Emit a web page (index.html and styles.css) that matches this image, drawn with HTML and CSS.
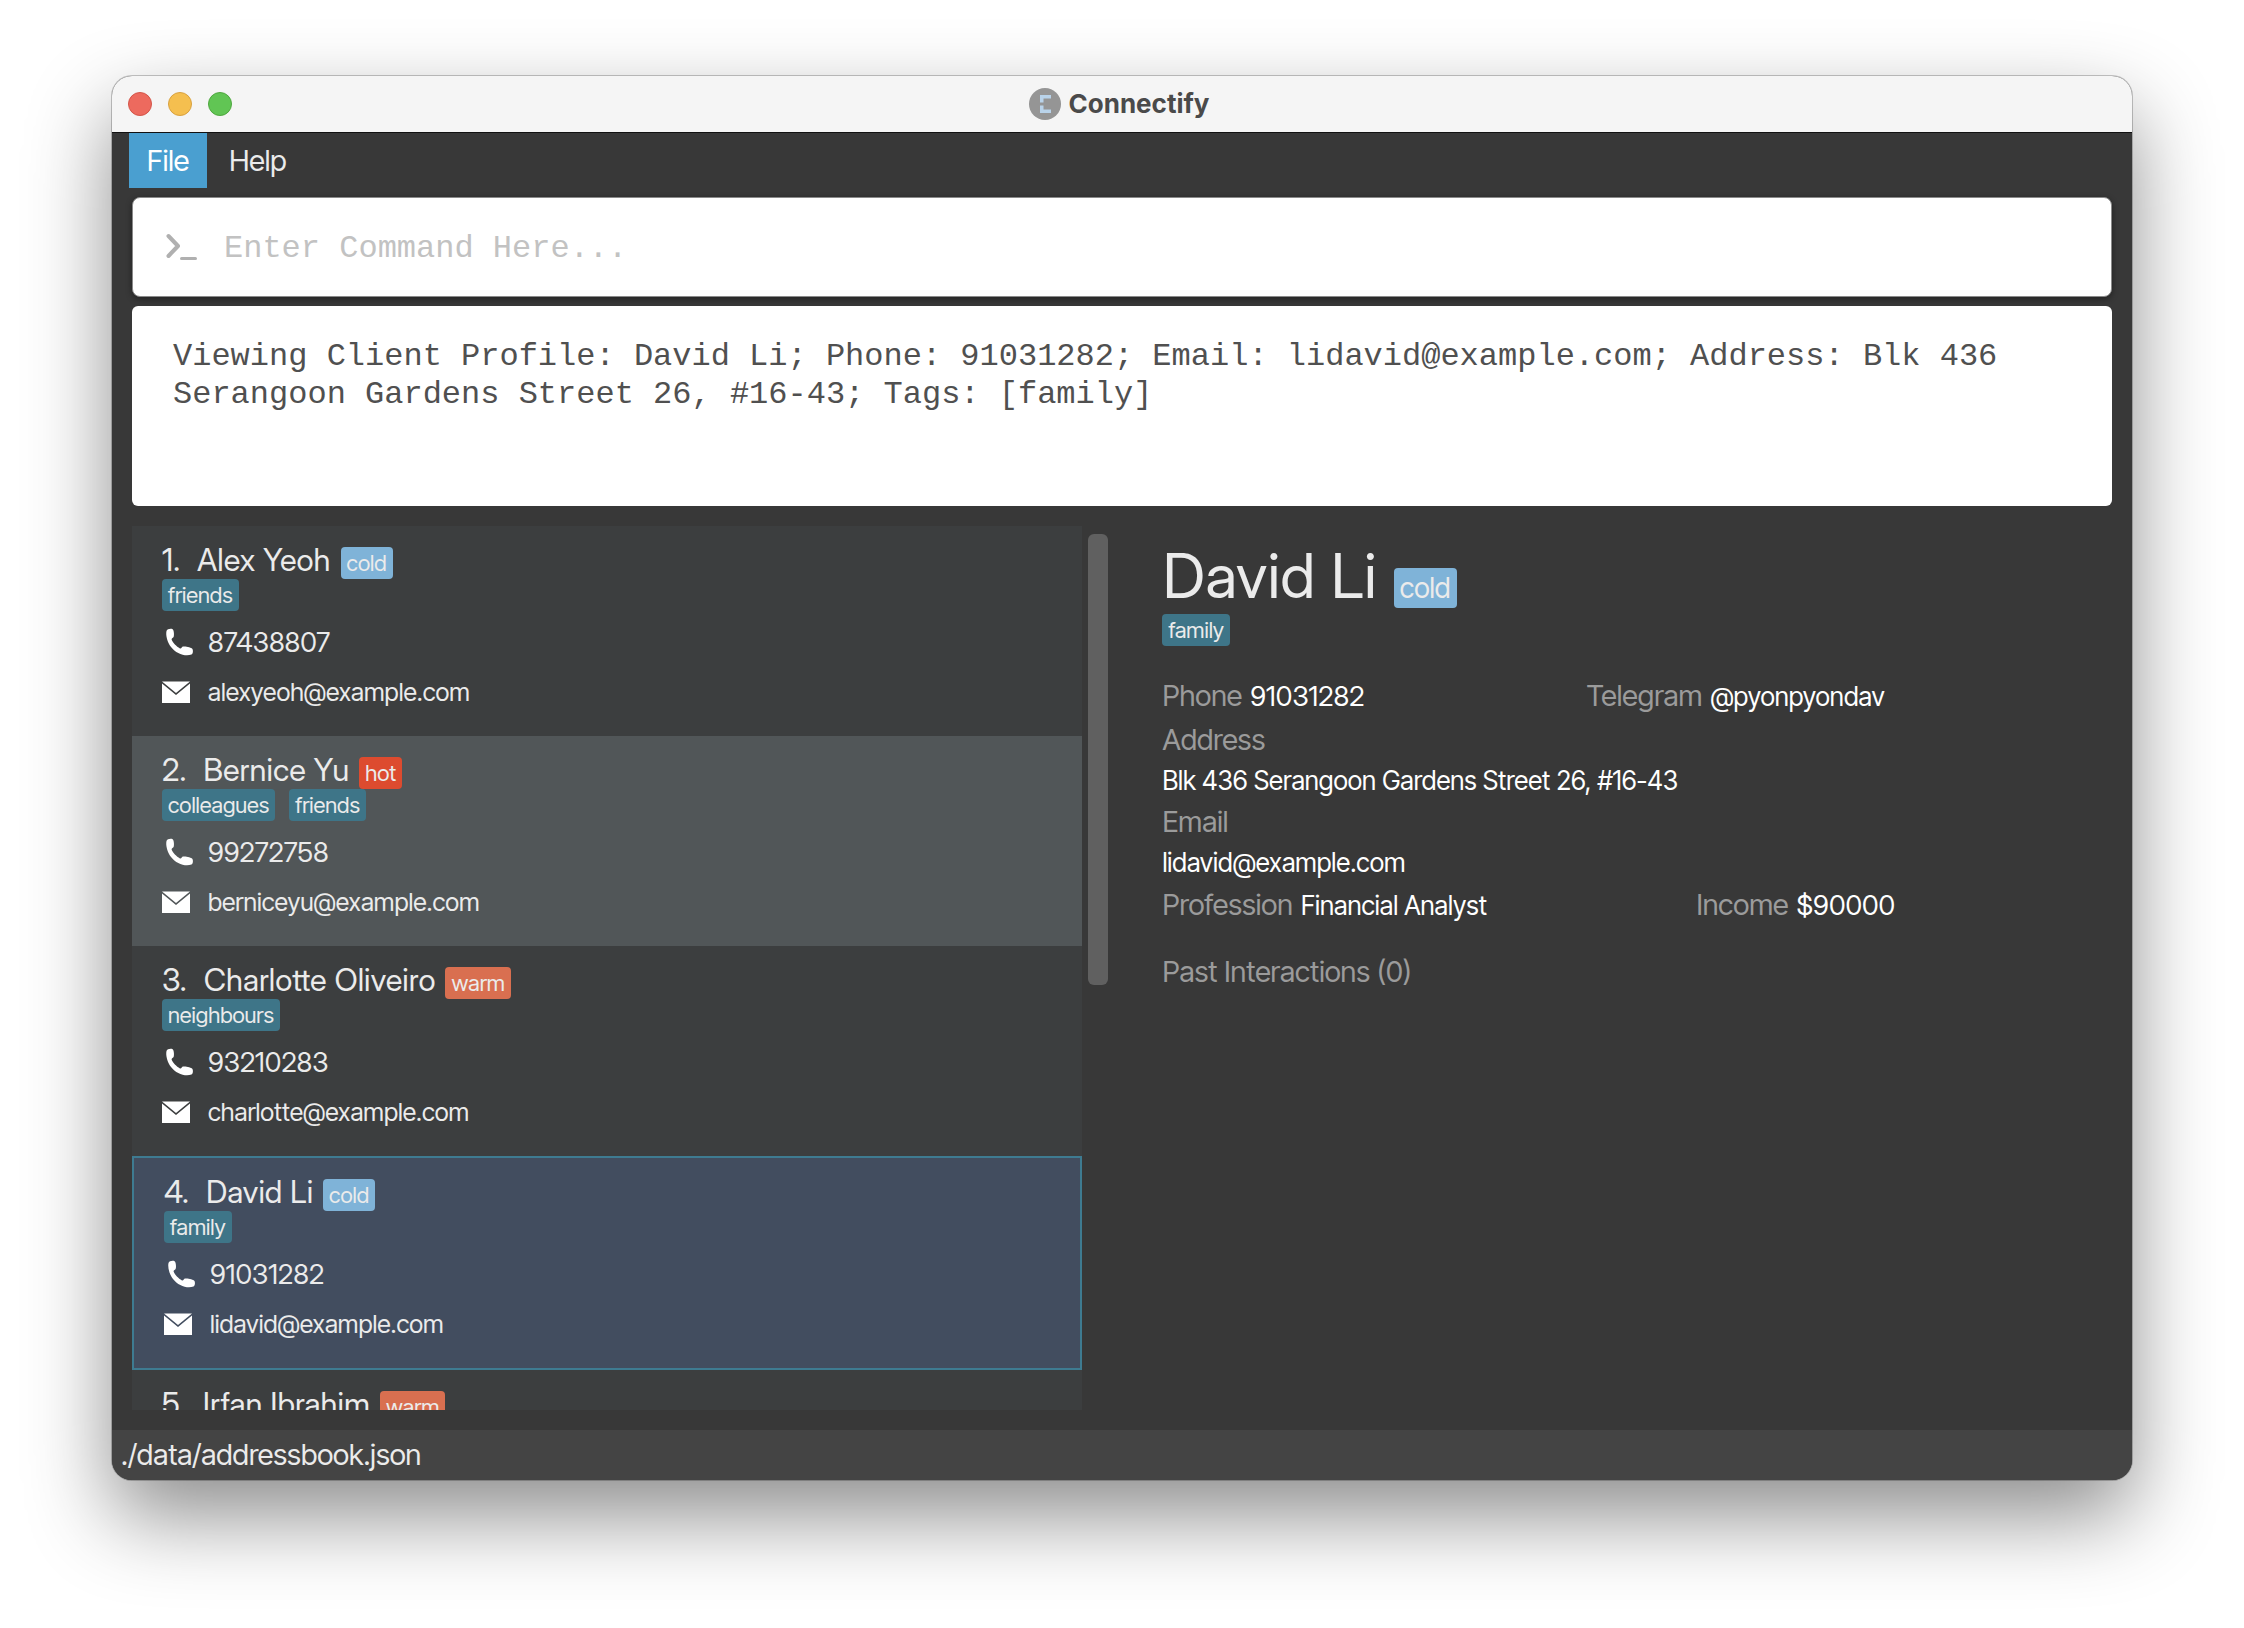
FILE: index.html
```html
<!DOCTYPE html>
<html lang="en">
<head>
  <meta charset="utf-8">
  <title>Connectify</title>
  <link rel="stylesheet" href="styles.css">
</head>
<body>
  <svg class="sprite" aria-hidden="true">
    <symbol id="icon-phone" viewBox="0 0 32 32">
      <path d="M4.500 5C5 3.200 8.500 2.200 10.600 3.200C12 4 12.300 9 11.700 10.800C11.400 11.800 9.300 12.400 9.600 13.600C10.800 17 14.500 20.600 18 22.400C19.200 23 20 20.800 21 20.600C23.500 20 29.500 21.500 30.500 23C31.400 25 30.900 28 29.500 28.600C23 31 14 27.500 9 21C5.500 16.500 3.500 9.500 4.500 5Z" fill="#fff"/>
    </symbol>
    <symbol id="icon-mail" viewBox="0 0 32 32">
      <path d="M0 5.500H28L14 17Z" fill="#fff"/>
      <path d="M0 7.500L14 19L28 7.500V27H0Z" fill="#fff"/>
    </symbol>
  </svg>

  <div class="window">
    <header class="titlebar">
      <div class="lights">
        <button class="light light-close" aria-label="Close"></button>
        <button class="light light-minimise" aria-label="Minimise"></button>
        <button class="light light-zoom" aria-label="Zoom"></button>
      </div>
      <h1 class="app-title">
        <svg class="logo" viewBox="0 0 32 32" aria-hidden="true">
          <circle cx="16" cy="16" r="16" fill="#959595"/>
          <path d="M22 7H11V14.500H14.500V10.500H22ZM11 17.500V25H22V21.500H14.500V17.500Z" fill="#b9d3ea"/>
        </svg>
        Connectify
      </h1>
    </header>

    <nav class="menubar">
      <button class="menu menu-open">File</button>
      <button class="menu">Help</button>
    </nav>

    <div class="content">
      <label class="command">
        <svg class="prompt" viewBox="0 0 32 32" role="img" aria-label="Command">
          <path d="M2.500 5L12 15L2.500 25" fill="none" stroke="#b0b0b0" stroke-width="4" stroke-linecap="round" stroke-linejoin="round"/>
          <path d="M15.500 27.500H29.500" stroke="#b0b0b0" stroke-width="3" stroke-linecap="round"/>
        </svg>
        <input class="command-input" type="text" placeholder="Enter Command Here...">
      </label>

      <output class="result">Viewing Client Profile: David Li; Phone: 91031282; Email: lidavid@example.com; Address: Blk 436 Serangoon Gardens Street 26, #16-43; Tags: [family]</output>

      <main class="panes">
        <ol class="clients">
          <li class="client">
            <h2 class="client-name"><span>1.</span><span>Alex Yeoh</span><span class="tag tag-cold">cold</span></h2>
            <div class="tags"><span class="tag">friends</span></div>
            <p class="contact contact-phone"><svg class="icon"><use href="#icon-phone"/></svg>87438807</p>
            <p class="contact"><svg class="icon"><use href="#icon-mail"/></svg>alexyeoh@example.com</p>
          </li>
          <li class="client">
            <h2 class="client-name"><span>2.</span><span>Bernice Yu</span><span class="tag tag-hot">hot</span></h2>
            <div class="tags"><span class="tag">colleagues</span><span class="tag">friends</span></div>
            <p class="contact contact-phone"><svg class="icon"><use href="#icon-phone"/></svg>99272758</p>
            <p class="contact"><svg class="icon"><use href="#icon-mail"/></svg>berniceyu@example.com</p>
          </li>
          <li class="client">
            <h2 class="client-name"><span>3.</span><span>Charlotte Oliveiro</span><span class="tag tag-warm">warm</span></h2>
            <div class="tags"><span class="tag">neighbours</span></div>
            <p class="contact contact-phone"><svg class="icon"><use href="#icon-phone"/></svg>93210283</p>
            <p class="contact"><svg class="icon"><use href="#icon-mail"/></svg>charlotte@example.com</p>
          </li>
          <li class="client client-selected">
            <h2 class="client-name"><span>4.</span><span>David Li</span><span class="tag tag-cold">cold</span></h2>
            <div class="tags"><span class="tag">family</span></div>
            <p class="contact contact-phone"><svg class="icon"><use href="#icon-phone"/></svg>91031282</p>
            <p class="contact"><svg class="icon"><use href="#icon-mail"/></svg>lidavid@example.com</p>
          </li>
          <li class="client">
            <h2 class="client-name"><span>5.</span><span>Irfan Ibrahim</span><span class="tag tag-warm">warm</span></h2>
          </li>
        </ol>
        <div class="scrollbar"><div class="thumb"></div></div>

        <section class="profile">
          <h2 class="profile-name">David Li<span class="tag tag-large tag-cold">cold</span></h2>
          <div class="tags"><span class="tag">family</span></div>
          <dl class="facts">
            <div class="fact-row">
              <div class="fact fact-phone"><dt>Phone</dt><dd class="number">91031282</dd></div>
              <div class="fact"><dt>Telegram</dt><dd>@pyonpyondav</dd></div>
            </div>
            <div class="fact-block"><dt>Address</dt><dd>Blk 436 Serangoon Gardens Street 26, #16-43</dd></div>
            <div class="fact-block"><dt>Email</dt><dd>lidavid@example.com</dd></div>
            <div class="fact-row">
              <div class="fact fact-profession"><dt>Profession</dt><dd>Financial Analyst</dd></div>
              <div class="fact"><dt>Income</dt><dd class="number">$90000</dd></div>
            </div>
          </dl>
          <h3 class="history">Past Interactions (0)</h3>
        </section>
      </main>
    </div>

    <footer class="statusbar">./data/addressbook.json</footer>
  </div>
</body>
</html>
```
FILE: styles.css
```css
* { box-sizing: border-box; }

body {
  margin: 0;
  background: #fff;
  color: #ebebeb;
  font-family: "Inter Tight", "Inter Display", Inter, sans-serif;
  font-size: 29px;
}

h1, h2, h3, p, ol, dl, dd { margin: 0; padding: 0; font-weight: 400; }
ol { list-style: none; }
button { border: 0; padding: 0; font: inherit; color: inherit; background: none; }
.sprite { display: none; }

.window {
  display: flex;
  flex-direction: column;
  height: calc(100vh - 224px);
  margin: 76px 112px 148px;
  border-radius: 20px;
  overflow: hidden;
  background: #383838;
  box-shadow: 0 0 0 1px rgba(0, 0, 0, .22), 0 36px 84px rgba(0, 0, 0, .45);
}

.titlebar {
  display: grid;
  grid-template-columns: 1fr auto 1fr;
  align-items: center;
  flex: none;
  height: 57px;
  padding: 0 22px 0 16px;
  border-bottom: 1px solid #111;
  background: #f5f5f5;
}
.lights { display: flex; gap: 16px; }
.light { width: 24px; height: 24px; border: 1px solid; border-radius: 50%; }
.light-close { background: #ed6a5e; border-color: #d35549; }
.light-minimise { background: #f5bf4f; border-color: #d8a140; }
.light-zoom { background: #61c554; border-color: #4fa73f; }
.app-title {
  display: flex;
  align-items: center;
  gap: 8px;
  color: #4a4a4a;
  font: 700 26px/32px Inter, sans-serif;
}
.logo { width: 32px; height: 32px; }

.menubar { display: flex; flex: none; gap: 4px; height: 55px; padding-left: 17px; }
.menu { padding: 0 18px; }
.menu-open { background: #4a9fd0; color: #fff; }

.content {
  display: flex;
  flex-direction: column;
  flex: 1;
  min-height: 0;
  padding: 9px 20px 20px;
}

.command {
  display: flex;
  align-items: center;
  flex: none;
  gap: 26px;
  height: 100px;
  padding: 0 33px;
  border: 1px solid #8a8a8a;
  border-radius: 8px;
  background: #fff;
  box-shadow: 0 2px 6px rgba(0, 0, 0, .4);
}
.prompt { flex: none; width: 32px; height: 32px; }
.command-input {
  flex: 1;
  min-width: 0;
  padding: 4px 0 0;
  border: 0;
  outline: 0;
  background: none;
  color: #383838;
  font: 32px/38px "Liberation Mono", monospace;
}
.command-input::placeholder { color: #c2c2c2; opacity: 1; }

.result {
  display: block;
  flex: none;
  min-height: 200px;
  margin-top: 9px;
  padding: 32px 41px;
  border-radius: 6px;
  background: #fff;
  color: #505050;
  font: 32px/38px "Liberation Mono", monospace;
}

.panes { display: flex; flex: 1; min-height: 0; margin-top: 20px; }

.clients { flex: 0 0 48%; overflow: hidden; }
.client { height: 210px; padding: 18px 30px; background: #3c3e3f; }
.client:nth-child(even) { background: #515658; }
.client.client-selected { height: 214px; border: 2px solid #3e7b91; background: #424d5f; }
.client-name {
  display: flex;
  align-items: baseline;
  gap: 10px;
  height: 35px;
  font-family: "Inter Display", Inter, sans-serif;
  font-size: 31px;
  line-height: 32px;
}
.client-name span:first-child { margin-right: 7px; }

.tags { display: flex; gap: 14px; }
.tag {
  padding: 0 6px;
  border-radius: 4px;
  background: #3e7588;
  font-family: "Inter Tight", "Inter Display", Inter, sans-serif;
  font-size: 22px;
  line-height: 32px;
}
.tag-cold { background: #7fb3d8; }
.tag-warm { background: #d96f50; }
.tag-hot { background: #dd4b2f; }
.tag-large { font-size: 28px; line-height: 40px; }

.contact { display: flex; align-items: center; gap: 14px; height: 50px; font-size: 25px; }
.contact-phone { margin-top: 6px; }
.contact-phone, .number { font-family: "Inter Display", Inter, sans-serif; font-size: 27px; }
.icon { width: 32px; height: 32px; }

.scrollbar { flex: none; width: 20px; margin: 8px 0 0 6px; }
.thumb { height: 51.5%; border-radius: 6px; background: #606060; }

.profile { flex: 1; min-width: 0; padding: 14px 0 0 54px; }
.profile-name {
  display: flex;
  align-items: baseline;
  gap: 17px;
  height: 74px;
  font-family: "Inter Display", Inter, sans-serif;
  font-size: 62px;
  line-height: 72px;
}
.facts { margin-top: 28px; color: #fff; font-size: 26px; }
.facts dt { color: #9b9b9b; font-size: 29px; }
.fact-row { display: flex; line-height: 44px; }
.fact { display: flex; align-items: baseline; gap: 8px; }
.fact-phone { flex: 0 0 424px; }
.fact-profession { flex: 0 0 534px; }
.fact-block { line-height: 41px; }
.history { margin-top: 22px; color: #9b9b9b; font-size: 29px; line-height: 44px; }

.statusbar { flex: none; padding: 0 9px; background: #444; line-height: 50px; }
```
